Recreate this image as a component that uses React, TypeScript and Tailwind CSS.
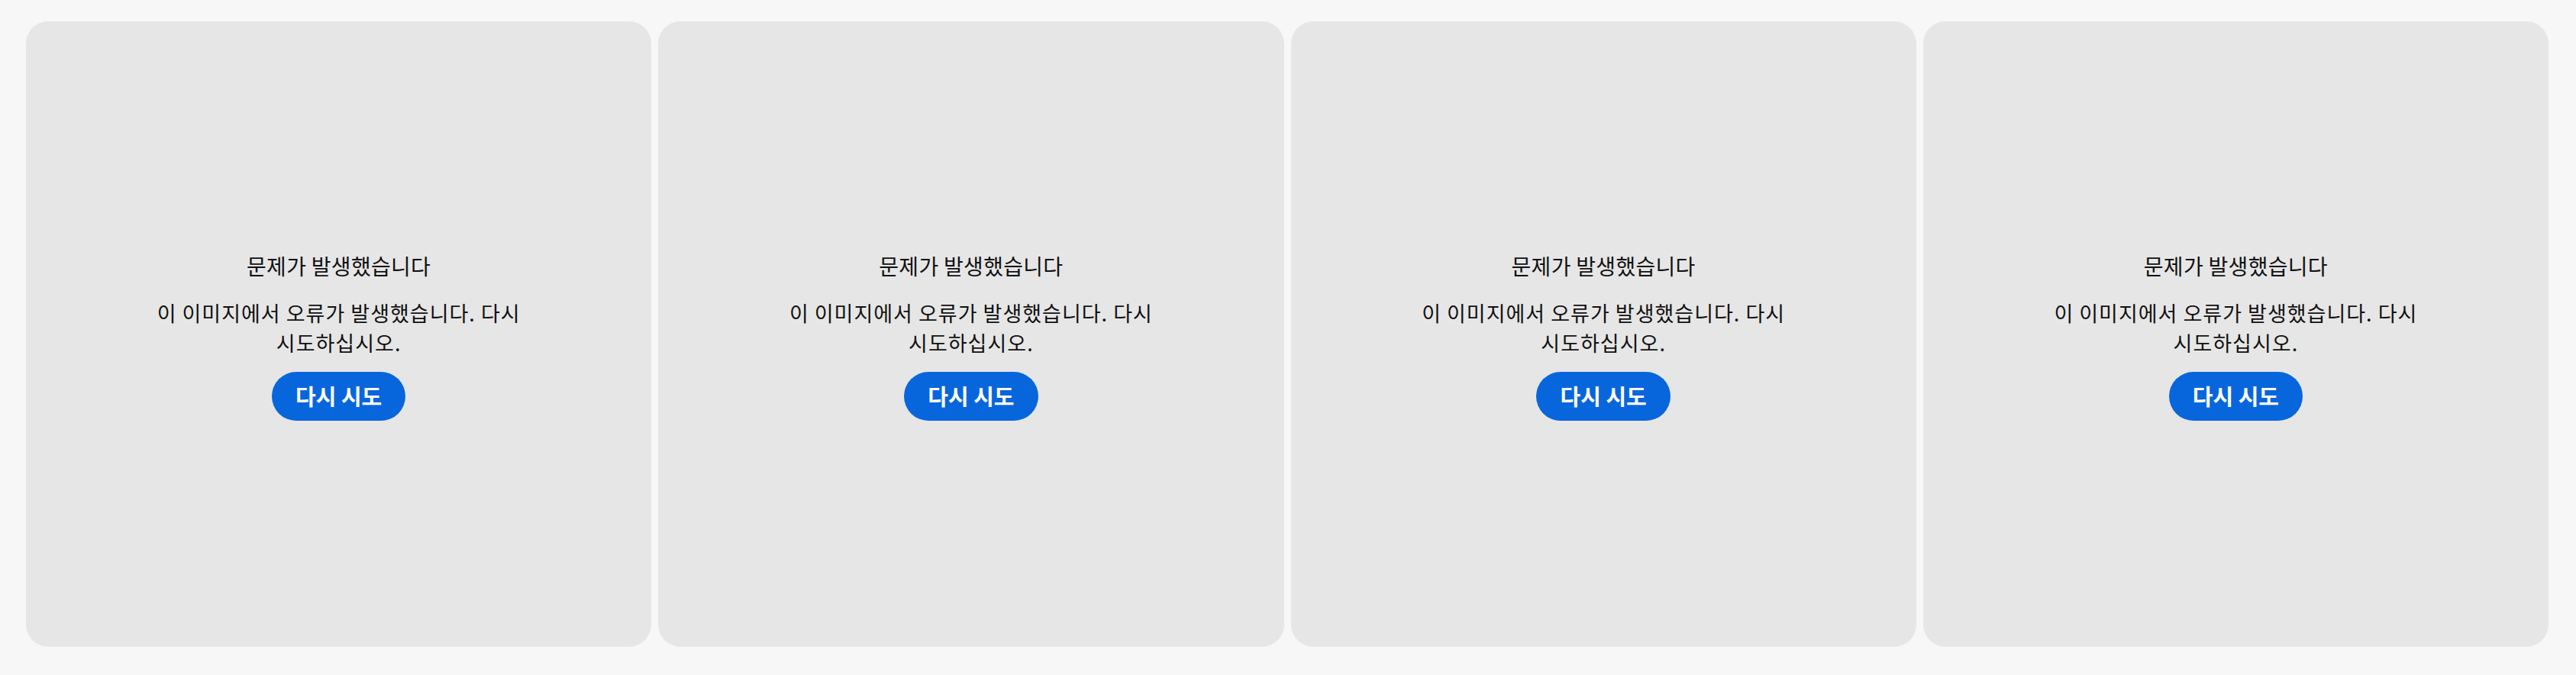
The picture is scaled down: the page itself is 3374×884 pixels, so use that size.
const font = { fontFamily: '"Noto Sans CJK KR", "Noto Sans", sans-serif' };

function ErrorCard() {
  return (
    <div className="aspect-square rounded-[29px] bg-[#e6e6e6] flex flex-col items-center justify-center pt-[4px] text-[#111111]">
      <p className="text-[28px] font-normal leading-[38px] tracking-[0.3px]">문제가 발생했습니다</p>
      <p className="mt-[23px] max-w-[530px] text-center text-[27px] leading-[39px] tracking-[1px] break-keep">
        이 이미지에서 오류가 발생했습니다. 다시 시도하십시오.
      </p>
      <button className="mt-[19px] h-[64px] px-[31px] rounded-full bg-[#0866dd] text-white text-[29px] font-bold">
        다시 시도
      </button>
    </div>
  );
}

export default function App() {
  return (
    <div className="min-h-screen bg-[#f7f7f7] pt-[28px] pl-[34px] pr-[36px]" style={font}>
      <div className="grid grid-cols-4 gap-[9px]">
        <ErrorCard />
        <ErrorCard />
        <ErrorCard />
        <ErrorCard />
      </div>
    </div>
  );
}
